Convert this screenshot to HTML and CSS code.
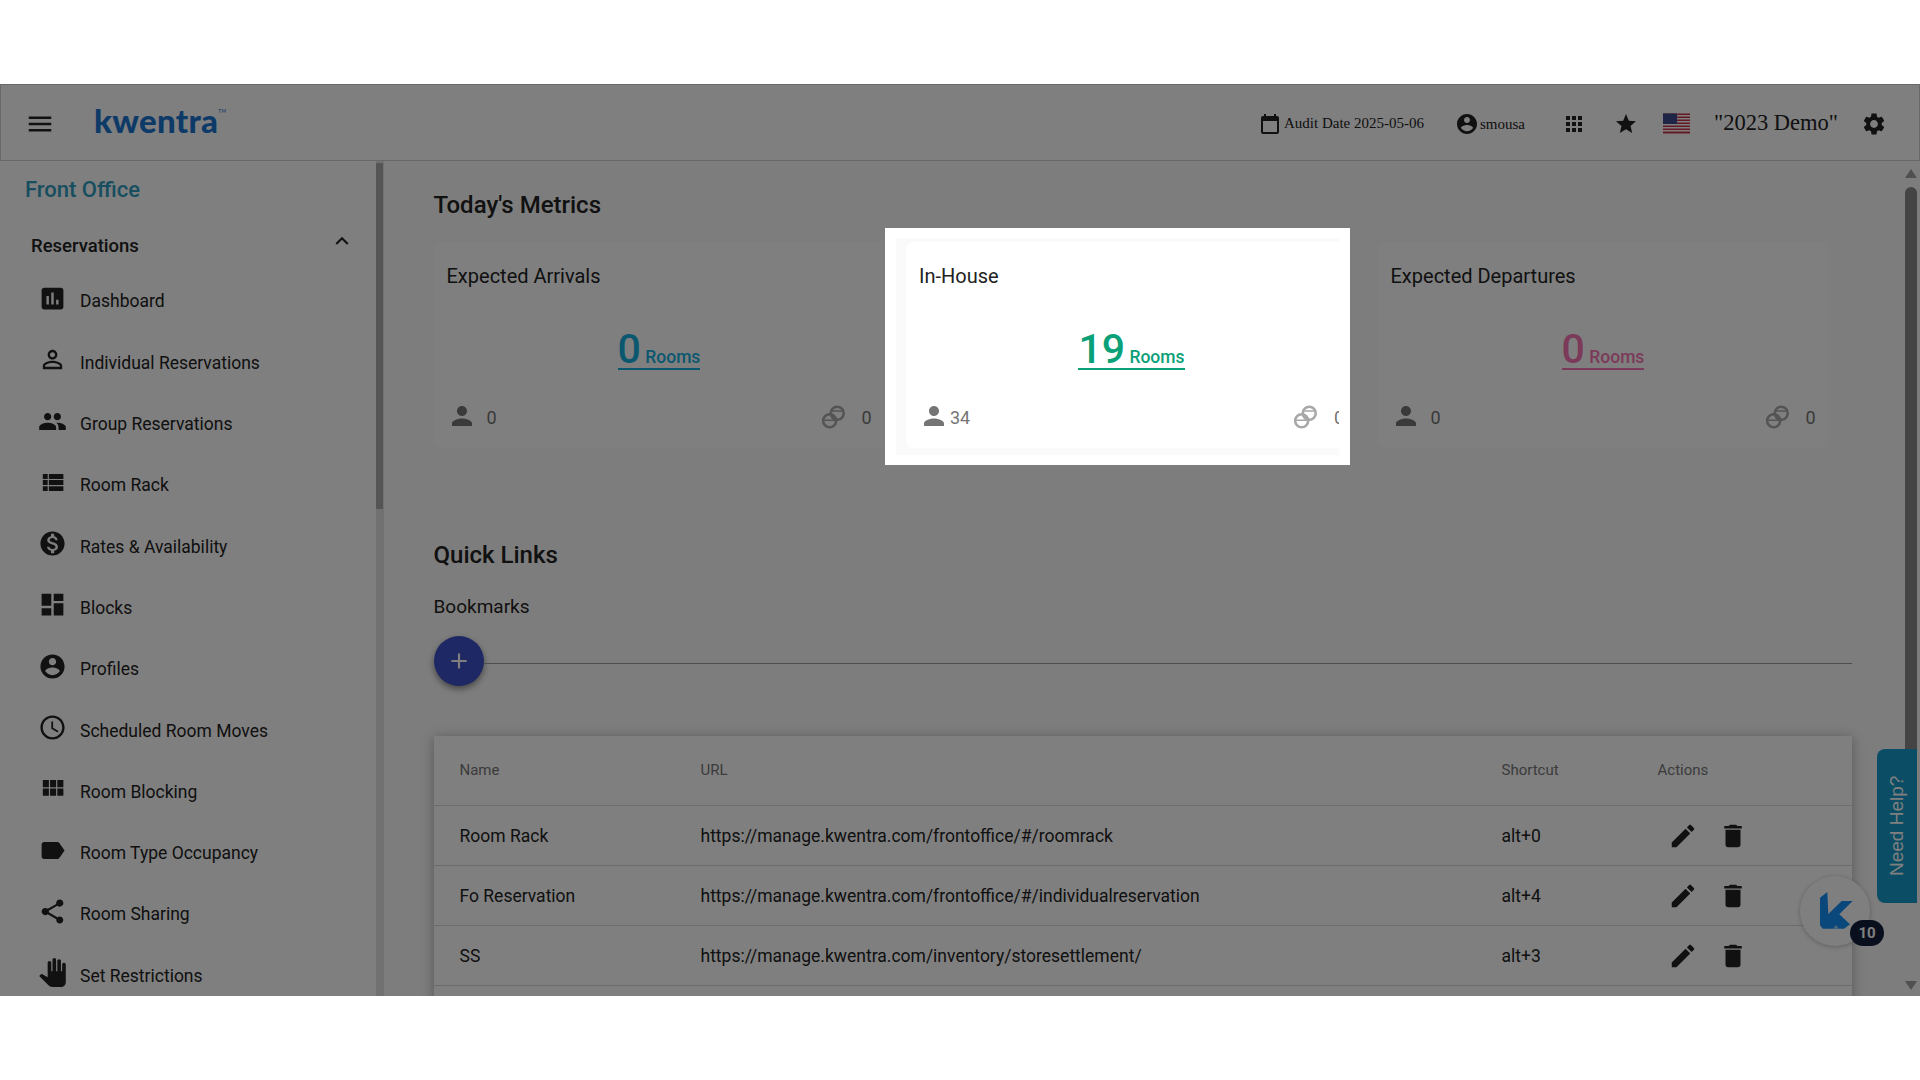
FILE: index.html
```html
<!DOCTYPE html>
<html>
    <head>
        <meta charset="utf-8">
        <title>Kwentra Front Office</title>
        <link rel="stylesheet" href="styles.css">
    </head>
    <body>
        <svg class="sprite">
            <symbol id="i-menu" viewBox="0 0 24 24"><path d="M3 18h18v-2H3v2zm0-5h18v-2H3v2zm0-7v2h18V6H3z"/></symbol>
            <symbol id="i-cal" viewBox="0 0 24 24"><path d="M19 4h-1V2h-2v2H8V2H6v2H5c-1.1 0-2 .9-2 2v14c0 1.1.9 2 2 2h14c1.1 0 2-.9 2-2V6c0-1.1-.9-2-2-2zm0 16H5V9h14v11z"/></symbol>
            <symbol id="i-account" viewBox="0 0 24 24"><path d="M12 2C6.48 2 2 6.48 2 12s4.48 10 10 10 10-4.48 10-10S17.52 2 12 2zm0 3c1.66 0 3 1.34 3 3s-1.34 3-3 3-3-1.34-3-3 1.34-3 3-3zm0 14.2c-2.5 0-4.71-1.28-6-3.22.03-1.99 4-3.08 6-3.08 1.99 0 5.97 1.09 6 3.08-1.29 1.94-3.5 3.22-6 3.22z"/></symbol>
            <symbol id="i-apps" viewBox="0 0 24 24"><path d="M4 8h4V4H4v4zm6 12h4v-4h-4v4zm-6 0h4v-4H4v4zm0-6h4v-4H4v4zm6 0h4v-4h-4v4zm6-10v4h4V4h-4zm-6 4h4V4h-4v4zm6 6h4v-4h-4v4zm0 6h4v-4h-4v4z"/></symbol>
            <symbol id="i-star" viewBox="0 0 24 24"><path d="M12 17.27L18.18 21l-1.64-7.03L22 9.24l-7.19-.61L12 2 9.19 8.63 2 9.24l5.46 4.73L5.82 21z"/></symbol>
            <symbol id="i-gear" viewBox="0 0 24 24"><path d="M19.14 12.94c.04-.3.06-.61.06-.94 0-.32-.02-.64-.07-.94l2.03-1.58c.18-.14.23-.41.12-.61l-1.92-3.32c-.12-.22-.37-.29-.59-.22l-2.39.96c-.5-.38-1.03-.7-1.62-.94l-.36-2.54c-.04-.24-.24-.41-.48-.41h-3.84c-.24 0-.43.17-.47.41l-.36 2.54c-.59.24-1.13.57-1.62.94l-2.39-.96c-.22-.08-.47 0-.59.22L2.74 8.87c-.12.21-.08.47.12.61l2.03 1.58c-.05.3-.09.63-.09.94s.02.64.07.94l-2.03 1.58c-.18.14-.23.41-.12.61l1.92 3.32c.12.22.37.29.59.22l2.39-.96c.5.38 1.03.7 1.62.94l.36 2.54c.05.24.24.41.48.41h3.84c.24 0 .44-.17.47-.41l.36-2.54c.59-.24 1.13-.56 1.62-.94l2.39.96c.22.08.47 0 .59-.22l1.92-3.32c.12-.22.07-.47-.12-.61l-2.01-1.58zM12 15.6c-1.98 0-3.6-1.62-3.6-3.6s1.62-3.6 3.6-3.6 3.6 1.62 3.6 3.6-1.62 3.6-3.6 3.6z"/></symbol>
            <symbol id="i-person" viewBox="0 0 24 24"><path d="M12 12c2.21 0 4-1.79 4-4s-1.79-4-4-4-4 1.79-4 4 1.79 4 4 4zm0 2c-2.67 0-8 1.34-8 4v2h16v-2c0-2.66-5.33-4-8-4z"/></symbol>
            <symbol id="i-rings" viewBox="0 0 24 24"><g fill="none" stroke="currentColor" stroke-width="2.4"><circle cx="8" cy="15.5" r="6"/><circle cx="15" cy="8.5" r="6"/><path d="M3 15h10M10 6.5h10" stroke-width="1.4"/></g></symbol>
            <symbol id="i-edit" viewBox="0 0 24 24"><path d="M3 17.25V21h3.75L17.81 9.94l-3.75-3.75L3 17.25zM20.71 7.04c.39-.39.39-1.02 0-1.41l-2.34-2.34c-.39-.39-1.02-.39-1.41 0l-1.83 1.83 3.75 3.75 1.83-1.83z"/></symbol>
            <symbol id="i-trash" viewBox="0 0 24 24"><path d="M6 19c0 1.1.9 2 2 2h8c1.1 0 2-.9 2-2V7H6v12zM19 4h-3.5l-1-1h-5l-1 1H5v2h14V4z"/></symbol>
        </svg>

        <div class="app">
            <header class="topbar">
                <svg class="ic menu"><use href="#i-menu"/></svg>
                <div class="logo">kwentra<sup>TM</sup></div>
                <div class="top_right">
                    <svg class="ic cal"><use href="#i-cal"/></svg>
                    <span class="audit">Audit Date 2025-05-06</span>
                    <svg class="ic acct"><use href="#i-account"/></svg>
                    <span class="user">smousa</span>
                    <svg class="ic apps"><use href="#i-apps"/></svg>
                    <svg class="ic star"><use href="#i-star"/></svg>
                    <svg class="flag" viewBox="0 0 27 20">
                        <rect width="27" height="20" fill="#fff"/>
                        <path d="M0 0h27v1.5H0zM0 3h27v1.5H0zM0 6h27v1.5H0zM0 9h27v1.5H0zM0 12h27v1.5H0zM0 15h27v1.5H0zM0 18h27v2H0z" fill="#c8344a"/>
                        <rect width="14" height="10.5" fill="#3c4a8c"/>
                    </svg>
                    <span class="property">"2023 Demo"</span>
                    <svg class="ic gear"><use href="#i-gear"/></svg>
                </div>
            </header>

            <div class="body_row">
                <aside class="sidebar">
                    <div class="side_scroll">
                        <div class="module">Front Office</div>
                        <div class="group">
                            <span>Reservations</span>
                            <svg viewBox="0 0 24 24"><path d="M12 8l-6 6 1.41 1.41L12 10.83l4.59 4.58L18 14z"/></svg>
                        </div>
                        <ul class="nav">
                            <li><svg viewBox="0 0 24 24"><path d="M19 3H5c-1.1 0-2 .9-2 2v14c0 1.1.9 2 2 2h14c1.1 0 2-.9 2-2V5c0-1.1-.9-2-2-2zM9 17H7v-7h2v7zm4 0h-2V7h2v10zm4 0h-2v-4h2v4z"/></svg>Dashboard</li>
                            <li><svg viewBox="0 0 24 24"><path d="M12 5.9c1.16 0 2.1.94 2.1 2.1s-.94 2.1-2.1 2.1S9.9 9.16 9.9 8s.94-2.1 2.1-2.1m0 9c2.97 0 6.1 1.46 6.1 2.1v1.1H5.9V17c0-.64 3.13-2.1 6.1-2.1M12 4C9.79 4 8 5.79 8 8s1.79 4 4 4 4-1.79 4-4-1.79-4-4-4zm0 9c-2.67 0-8 1.34-8 4v3h16v-3c0-2.66-5.33-4-8-4z"/></svg>Individual Reservations</li>
                            <li><svg viewBox="0 0 24 24"><path d="M16 11c1.66 0 2.99-1.34 2.99-3S17.66 5 16 5c-1.66 0-3 1.34-3 3s1.34 3 3 3zm-8 0c1.66 0 2.99-1.34 2.99-3S9.66 5 8 5C6.34 5 5 6.34 5 8s1.34 3 3 3zm0 2c-2.33 0-7 1.17-7 3.5V19h14v-2.5c0-2.33-4.67-3.5-7-3.5zm8 0c-.29 0-.62.02-.97.05 1.16.84 1.97 1.97 1.97 3.45V19h6v-2.5c0-2.33-4.67-3.5-7-3.5z"/></svg>Group Reservations</li>
                            <li><svg viewBox="0 0 24 24"><path d="M4 14h4v-4H4v4zm0 5h4v-4H4v4zM4 9h4V5H4v4zm5 5h12v-4H9v4zm0 5h12v-4H9v4zM9 5v4h12V5H9z"/></svg>Room Rack</li>
                            <li><svg viewBox="0 0 24 24"><path d="M12 2C6.48 2 2 6.48 2 12s4.48 10 10 10 10-4.48 10-10S17.52 2 12 2zm1.41 16.09V20h-2.67v-1.93c-1.71-.36-3.16-1.46-3.27-3.4h1.96c.1 1.05.82 1.87 2.65 1.87 1.96 0 2.4-.98 2.4-1.59 0-.83-.44-1.61-2.67-2.14-2.48-.6-4.18-1.62-4.18-3.67 0-1.72 1.39-2.84 3.11-3.21V4h2.67v1.95c1.86.45 2.79 1.86 2.85 3.39H14.3c-.05-1.11-.64-1.87-2.22-1.87-1.5 0-2.4.68-2.4 1.64 0 .84.65 1.39 2.67 1.91s4.18 1.39 4.18 3.91c-.01 1.83-1.38 2.83-3.12 3.16z"/></svg>Rates &amp; Availability</li>
                            <li><svg viewBox="0 0 24 24"><path d="M3 13h8V3H3v10zm0 8h8v-6H3v6zm10 0h8V11h-8v10zm0-18v6h8V3h-8z"/></svg>Blocks</li>
                            <li><svg viewBox="0 0 24 24"><use href="#i-account"/></svg>Profiles</li>
                            <li><svg viewBox="0 0 24 24"><path d="M11.99 2C6.47 2 2 6.48 2 12s4.47 10 9.99 10C17.52 22 22 17.52 22 12S17.52 2 11.99 2zM12 20c-4.42 0-8-3.58-8-8s3.58-8 8-8 8 3.58 8 8-3.58 8-8 8zm.5-13H11v6l5.25 3.15.75-1.23-4.5-2.67z"/></svg>Scheduled Room Moves</li>
                            <li><svg viewBox="0 0 24 24"><path d="M4 11h5V5H4v6zm0 7h5v-6H4v6zm6 0h5v-6h-5v6zm6 0h5v-6h-5v6zm-6-7h5V5h-5v6zm6-6v6h5V5h-5z"/></svg>Room Blocking</li>
                            <li><svg viewBox="0 0 24 24"><path d="M17.63 5.84C17.27 5.33 16.67 5 16 5L5 5.01C3.9 5.01 3 5.9 3 7v10c0 1.1.9 1.99 2 1.99L16 19c.67 0 1.27-.33 1.63-.84L22 12l-4.37-6.16z"/></svg>Room Type Occupancy</li>
                            <li><svg viewBox="0 0 24 24"><path d="M18 16.08c-.76 0-1.44.3-1.96.77L8.91 12.7c.05-.23.09-.46.09-.7s-.04-.47-.09-.7l7.05-4.11c.54.5 1.25.81 2.04.81 1.66 0 3-1.34 3-3s-1.34-3-3-3-3 1.34-3 3c0 .24.04.47.09.7L8.04 9.81C7.5 9.31 6.79 9 6 9c-1.66 0-3 1.34-3 3s1.34 3 3 3c.79 0 1.5-.31 2.04-.81l7.12 4.16c-.05.21-.08.43-.08.65 0 1.61 1.31 2.92 2.92 2.92 1.61 0 2.92-1.31 2.92-2.92s-1.31-2.92-2.92-2.92z"/></svg>Room Sharing</li>
                            <li><svg viewBox="0 0 24 24"><path d="M23 5.5V20c0 2.2-1.8 4-4 4h-7.3c-1.08 0-2.1-.43-2.85-1.19L1 14.83s1.26-1.23 1.3-1.25c.22-.19.49-.29.79-.29.22 0 .42.06.6.16.04.01 4.31 2.46 4.31 2.46V4c0-.83.67-1.5 1.5-1.5S11 3.17 11 4v7h1V1.5c0-.83.67-1.5 1.5-1.5S15 .67 15 1.5V11h1V2.5c0-.83.67-1.5 1.5-1.5s1.5.67 1.5 1.5V11h1V5.5c0-.83.67-1.5 1.5-1.5s1.5.67 1.5 1.5z"/></svg>Set Restrictions</li>
                        </ul>
                    </div>
                    <div class="side_rail"><div class="side_thumb"></div></div>
                </aside>

                <main class="main">
                    <div class="content">
                        <h2 class="h_metrics">Today's Metrics</h2>
                        <div class="cards">
                            <div class="card">
                                <div class="card_title">Expected Arrivals</div>
                                <div class="card_value"><a class="blue"><b>0</b> Rooms</a></div>
                                <div class="card_foot">
                                    <div class="stat"><svg class="person"><use href="#i-person"/></svg><span class="count">0</span></div>
                                    <div class="stat"><svg class="rings"><use href="#i-rings"/></svg><span class="num">0</span></div>
                                </div>
                            </div>
                            <div></div>
                            <div class="card">
                                <div class="card_title">Expected Departures</div>
                                <div class="card_value"><a class="pink"><b>0</b> Rooms</a></div>
                                <div class="card_foot">
                                    <div class="stat"><svg class="person"><use href="#i-person"/></svg><span class="count">0</span></div>
                                    <div class="stat"><svg class="rings"><use href="#i-rings"/></svg><span class="num">0</span></div>
                                </div>
                            </div>
                        </div>

                        <h2 class="h_links">Quick Links</h2>
                        <div class="bookmarks">Bookmarks</div>
                        <div class="add_row">
                            <div class="fab"><svg viewBox="0 0 24 24"><path d="M19 13h-6v6h-2v-6H5v-2h6V5h2v6h6v2z"/></svg></div>
                            <div class="add_line"></div>
                        </div>

                        <table class="links">
                            <thead>
                                <tr><th class="c_name">Name</th><th class="c_url">URL</th><th class="c_key">Shortcut</th><th>Actions</th></tr>
                            </thead>
                            <tbody>
                                <tr>
                                    <td>Room Rack</td><td>https://manage.kwentra.com/frontoffice/#/roomrack</td><td>alt+0</td>
                                    <td class="acts"><svg><use href="#i-edit"/></svg><svg><use href="#i-trash"/></svg></td>
                                </tr>
                                <tr>
                                    <td>Fo Reservation</td><td>https://manage.kwentra.com/frontoffice/#/individualreservation</td><td>alt+4</td>
                                    <td class="acts"><svg><use href="#i-edit"/></svg><svg><use href="#i-trash"/></svg></td>
                                </tr>
                                <tr>
                                    <td>SS</td><td>https://manage.kwentra.com/inventory/storesettlement/</td><td>alt+3</td>
                                    <td class="acts"><svg><use href="#i-edit"/></svg><svg><use href="#i-trash"/></svg></td>
                                </tr>
                                <tr><td></td><td></td><td></td><td></td></tr>
                            </tbody>
                        </table>
                    </div>
                    <div class="rail">
                        <div class="arrow_up"></div>
                        <div class="rail_thumb"></div>
                        <div class="arrow_down"></div>
                    </div>
                </main>
            </div>

            <div class="need_help">Need Help?</div>
            <div class="chat">
                <svg viewBox="0 0 33 37">
                    <path d="M0 5.7L7.3 0l1 22L21.7 9h11L19.3 22.3 30 32.3 24 36.7H2.7L0 33.3z" fill="#1490f8"/>
                    <path d="M13 36.7l3-3.7 3.4 3.7z" fill="#8ccdf5"/>
                </svg>
                <span class="badge">10</span>
            </div>

            <div class="overlay"></div>

            <div class="spot">
                <div class="spot_inner">
                    <div class="card">
                        <div class="card_title">In-House</div>
                        <div class="card_value"><a class="green"><b>19</b> Rooms</a></div>
                        <div class="card_foot">
                            <div class="stat"><svg class="person"><use href="#i-person"/></svg><span class="count tight">34</span></div>
                            <div class="stat"><svg class="rings"><use href="#i-rings"/></svg><span class="num">0</span></div>
                        </div>
                    </div>
                </div>
            </div>
        </div>
    </body>
</html>
```

FILE: styles.css
```css
* {
    box-sizing: border-box;
}
html, body {
    margin: 0;
    height: 100%;
    background: #fff;
    overflow: hidden;
}
body {
    font-family: Roboto, "Liberation Sans", sans-serif;
    color: #222;
}
.sprite {
    display: none;
}
.app {
    position: relative;
    margin-top: 84px;
    height: 912px;
    overflow: hidden;
    background: #fff;
}

/* top bar */
.topbar {
    display: flex;
    align-items: center;
    height: 77px;
    border: 1px solid #d0d0d0;
    background: #fff;
}
.ic {
    flex: none;
    width: 24px;
    height: 24px;
    fill: #222;
}
.menu {
    width: 30px;
    height: 30px;
    margin: 3px 0 0 24px;
}
.logo {
    margin-left: 39px;
    margin-top: -6px;
    font-family: Lato, sans-serif;
    font-weight: 900;
    font-size: 33px;
    line-height: 40px;
    letter-spacing: .3px;
    color: #1c74d0;
}
.logo sup {
    font-size: 5px;
    font-weight: 400;
    vertical-align: 20px;
    line-height: 0;
}
.top_right {
    display: flex;
    align-items: center;
    margin-left: auto;
    margin-top: 2px;
    font-family: "Liberation Serif", serif;
    color: #222;
}
.cal {
    margin-right: 2px;
}
.audit {
    font-size: 15px;
    margin-top: -1px;
}
.acct {
    margin-left: 31px;
    margin-right: 1px;
    width: 24px;
}
.user {
    font-size: 15px;
    margin-top: 1px;
}
.apps {
    margin-left: 37px;
}
.star {
    margin-left: 28px;
}
.flag {
    width: 27px;
    height: 21px;
    margin-left: 25px;
}
.property {
    font-size: 22.5px;
    margin-left: 24px;
    margin-top: -2px;
}
.gear {
    width: 26px;
    height: 26px;
    margin-left: 23px;
    margin-right: 32px;
}

/* left menu */
.body_row {
    display: flex;
    height: 835px;
}
.sidebar {
    flex: none;
    display: flex;
    width: 384px;
    height: 100%;
    background: #fff;
}
.side_scroll {
    flex: 1;
    overflow: hidden;
}
.side_rail {
    width: 8px;
    background: #e2e2e2;
}
.side_thumb {
    height: 346px;
    width: 7px;
    margin-top: 2px;
    background: #ababab;
}
.module {
    margin: 15px 0 0 25px;
    font-size: 22px;
    line-height: 28px;
    font-weight: 500;
    color: #2f9cc0;
}
.group {
    display: flex;
    justify-content: space-between;
    margin: 28.5px 0 0 31px;
    padding-right: 21px;
    font-size: 18.5px;
    line-height: 26px;
    font-weight: 500;
}
.group svg {
    width: 26px;
    height: 26px;
    margin-top: -5px;
    fill: #222;
}
.nav {
    list-style: none;
    margin: 12.3px 0 0;
    padding: 0;
}
.nav li {
    display: flex;
    align-items: center;
    height: 61.3px;
    padding-left: 38px;
    font-size: 17.5px;
}
.nav svg {
    flex: none;
    width: 29px;
    height: 29px;
    margin: -6px 13px 0 0;
    fill: #222;
}

/* main */
.main {
    flex: 1;
    display: flex;
    min-width: 0;
    background: #fafafa;
}
.content {
    flex: 1;
    min-width: 0;
    padding: 0 53.5px 0 49.5px;
    overflow: hidden;
}
h2 {
    margin: 0;
    font-size: 24px;
    line-height: 28px;
    font-weight: 500;
}
.h_metrics {
    margin-top: 30px;
}
.cards {
    display: grid;
    grid-template-columns: repeat(3, 450px);
    gap: 22px;
    margin-top: 23px;
}
.card {
    width: 450px;
    height: 206px;
    padding: 21px 12px 0 13px;
    background: #fff;
    border-radius: 8px;
}
.card_title {
    font-size: 20px;
    line-height: 26px;
}
.card_value {
    margin-top: 41px;
    height: 53px;
    text-align: center;
    font-size: 17.5px;
    font-weight: 500;
}
.card_value a {
    display: inline-block;
    height: 40px;
    line-height: 38px;
    border-bottom: 2.5px solid currentColor;
}
.card_value b {
    font-size: 41px;
    font-weight: 500;
}
.blue { color: #14b0e0; }
.green { color: #0aa078; }
.pink { color: #f874b4; }
.card_foot {
    display: flex;
    justify-content: space-between;
    margin-top: 19px;
    font-size: 18px;
    color: #757575;
}
.stat {
    display: flex;
    align-items: center;
    height: 30px;
}
.person {
    width: 30px;
    height: 30px;
    margin-top: -2px;
    fill: #757575;
}
.count {
    width: 30px;
    text-align: center;
}
.tight {
    text-align: left;
    padding-left: 1px;
}
.rings {
    width: 26px;
    height: 26px;
    color: #a8a8a8;
    margin-right: 15px;
}
.num {
    width: 10px;
}
.h_links {
    margin-top: 93px;
}
.bookmarks {
    margin-top: 27px;
    font-size: 19px;
    line-height: 22px;
}
.add_row {
    display: flex;
    align-items: center;
    margin-top: 18px;
}
.fab {
    flex: none;
    display: flex;
    align-items: center;
    justify-content: center;
    width: 50px;
    height: 50px;
    border-radius: 50%;
    background: #3c50c8;
    box-shadow: 0 3px 6px rgba(0, 0, 0, .45);
}
.fab svg {
    width: 26px;
    height: 26px;
    fill: #fff;
}
.add_line {
    flex: 1;
    height: 1px;
    margin-top: 4px;
    background: #9a9a9a;
}
.links {
    width: 100%;
    margin-top: 50px;
    table-layout: fixed;
    border-collapse: collapse;
    background: #fff;
    box-shadow: 0 2px 12px rgba(0, 0, 0, .3);
}
.links th {
    height: 69px;
    padding: 0 0 0 26px;
    font-size: 15px;
    font-weight: 400;
    text-align: left;
    color: #777;
    border-bottom: 1px solid #d8d8d8;
}
.links td {
    height: 60px;
    padding: 2px 0 0 26px;
    font-size: 17.5px;
    border-bottom: 1px solid #d8d8d8;
}
.c_name { width: 241px; }
.c_url { width: 801px; }
.c_key { width: 156px; }
.acts {
    white-space: nowrap;
}
.links .acts {
    padding-left: 36px;
}
.acts svg {
    width: 30px;
    height: 30px;
    margin-right: 20px;
    fill: #222;
    vertical-align: middle;
}

/* page scrollbar */
.rail {
    flex: none;
    position: relative;
    width: 15px;
}
.arrow_up, .arrow_down {
    position: absolute;
    left: 0;
    width: 0;
    height: 0;
    border-left: 6px solid transparent;
    border-right: 6px solid transparent;
}
.arrow_up {
    top: 8px;
    border-bottom: 9px solid #a0a0a0;
}
.arrow_down {
    bottom: 6px;
    border-top: 9px solid #a0a0a0;
}
.rail_thumb {
    position: absolute;
    top: 26px;
    left: 0;
    width: 12px;
    height: 600px;
    border-radius: 6px;
    background: #888;
}

/* floating things */
.need_help {
    position: absolute;
    left: 1877px;
    top: 665px;
    width: 40px;
    height: 154px;
    display: flex;
    align-items: center;
    justify-content: center;
    writing-mode: vertical-rl;
    transform: rotate(180deg);
    border-radius: 0 8px 8px 0;
    background: #149ac8;
    color: #fff;
    font-family: "Liberation Sans", sans-serif;
    font-size: 19px;
}
.chat {
    position: absolute;
    left: 1800px;
    top: 792px;
    width: 70px;
    height: 70px;
    padding: 16px 0 0 20px;
    border-radius: 50%;
    background: #fff;
    box-shadow: 0 1px 5px rgba(0, 0, 0, .25);
}
.chat svg {
    display: block;
    width: 33px;
    height: 37px;
}
.badge {
    position: absolute;
    left: 50px;
    top: 44px;
    width: 34px;
    height: 26px;
    border-radius: 13px;
    background: #141e3c;
    color: #fff;
    font-size: 15px;
    font-weight: 700;
    line-height: 26px;
    text-align: center;
}

/* tour overlay with the card lifted above it */
.overlay {
    position: absolute;
    inset: 0;
    background: rgba(0, 0, 0, .5);
}
.spot {
    position: absolute;
    left: 885px;
    top: 144px;
    width: 465px;
    height: 237px;
    padding: 10px 11px;
    background: #fff;
}
.spot_inner {
    height: 100%;
    padding: 4px 0 0 10px;
    overflow: hidden;
    background: #fafafa;
}
```
